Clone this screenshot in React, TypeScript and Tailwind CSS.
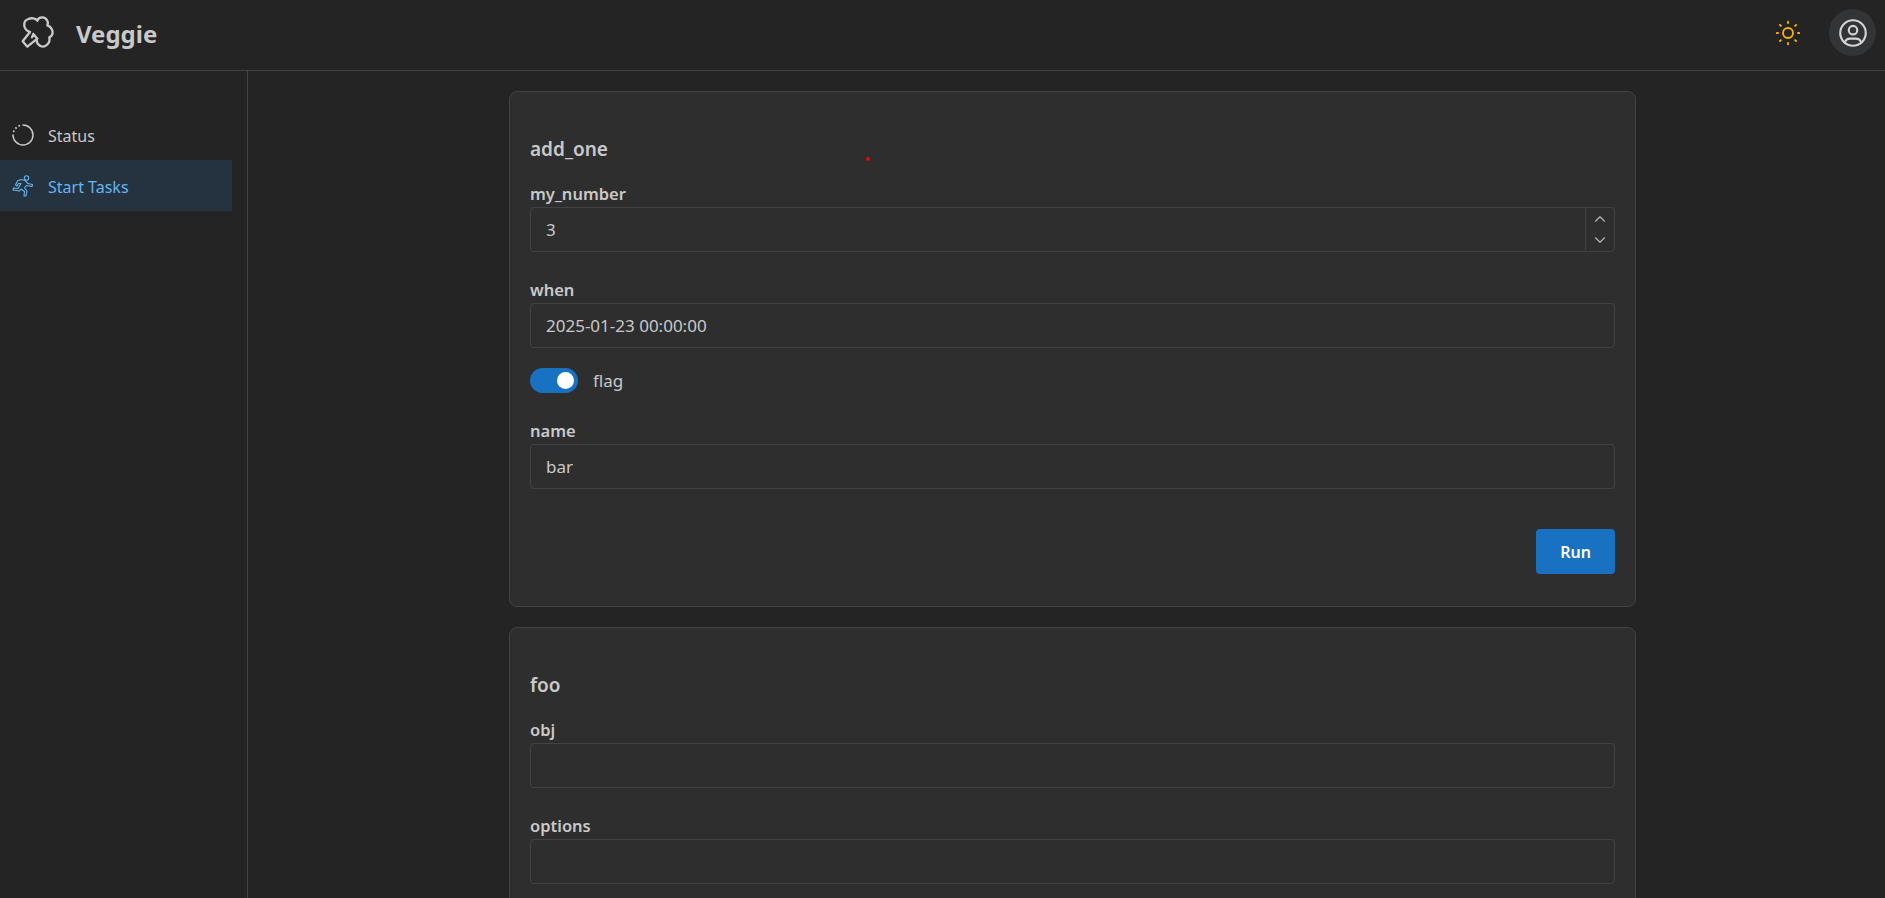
import { TbSun, TbUserCircle, TbChevronUp, TbChevronDown } from "react-icons/tb";

function Field({ label, value, number, className }: { label: string; value?: string; number?: boolean; className: string }) {
  return (
    <div className={className}>
      <div className="text-[16.5px] leading-[20px] font-semibold text-[#c9c9c9] mb-[3px]">{label}</div>
      <div className="relative h-[45px] border border-[#424242] rounded-[4px] bg-[#2e2e2e] flex items-center pl-[15px] text-[17px] text-[#c9c9c9]">
        {value}
        {number && (
          <div className="absolute right-0 top-0 bottom-0 w-[29px] border-l border-[#424242] flex flex-col items-center justify-between py-[2px] text-[#b8b8b8]">
            <TbChevronUp size={18} strokeWidth={1.5} />
            <TbChevronDown size={18} strokeWidth={1.5} />
          </div>
        )}
      </div>
    </div>
  );
}

function Logo() {
  return (
    <svg width="60" height="50" viewBox="0 0 180 150" fill="none" stroke="#c9c9c9" strokeWidth="7" strokeLinecap="round" strokeLinejoin="round" className="mb-[4px]">
      <path d="M60 72 C40 66 36 40 55 33 C65 28 78 32 82 38 C86 26 105 24 112 38 C116 46 112 50 112 52 C128 58 135 80 118 88 C122 105 105 122 90 113 C84 110 80 105 80 97" />
      <path d="M60 72 L38 100 L52 116 L82 92 L70 78 M70 78 L66 88" />
    </svg>
  );
}

function StatusIcon() {
  return (
    <svg width="24" height="24" viewBox="0 0 24 24" fill="none" stroke="currentColor" strokeWidth="1.5" strokeLinecap="round">
      <path d="M12 2a10 10 0 1 1 -10 10" />
      <path d="M2.8 8.2h.01M5 5h.01M8.2 2.8h.01" strokeWidth="2" />
    </svg>
  );
}

function RunIcon() {
  return (
    <svg width="24" height="24" viewBox="0 0 24 24" fill="none" stroke="currentColor" strokeWidth="1.1" strokeLinejoin="round">
      <circle cx="15.5" cy="4" r="2.2" />
      <path d="M10 5.5 L14 6.5 L17 9.5 L21.5 10.5 L21 12.5 L15.5 11.5 L13.5 14 L16 17 L15 22 L13 22 L13.5 17.5 L10 15 L8.5 17 L2 16 L2.5 14 L7 14.5 L10 9.5 L7.5 9.5 L6 12 L4.5 11 L6.5 7 Z" />
    </svg>
  );
}

export default function App() {
  return (
    <div className="h-[898px] overflow-hidden bg-[#242424] font-['Noto_Sans','Open_Sans',sans-serif] flex flex-col">
      <header className="h-[71px] shrink-0 border-b border-[#424242] flex items-center pl-[10px] pr-[9px]">
        <Logo />
        <div className="ml-[6px] mb-[2px] text-[24px] font-bold text-[#c9c9c9]">Veggie</div>
        <div className="ml-auto mb-[5px] flex items-center gap-[26px]">
          <TbSun size={30} strokeWidth={1.5} className="text-[#fab005]" />
          <div className="w-[47px] h-[47px] rounded-full bg-[#323436] flex items-center justify-center text-[#d4d4d4]">
            <TbUserCircle size={34} strokeWidth={1.5} />
          </div>
        </div>
      </header>
      <div className="flex flex-1 min-h-0">
        <aside className="w-[248px] shrink-0 border-r border-[#424242] pt-[38px]">
          <nav className="w-[232px]">
            <div className="h-[51px] flex items-center pl-[11px] text-[#c9c9c9] text-[16px]">
              <StatusIcon />
              <span className="ml-[13px] mt-[2px]">Status</span>
            </div>
            <div className="h-[51px] flex items-center pl-[11px] text-[#66b5f0] bg-[#24333f] text-[16px]">
              <RunIcon />
              <span className="ml-[13px] mt-[2px]">Start Tasks</span>
            </div>
          </nav>
        </aside>
        <main className="flex-1 min-w-0 pl-[261px] pr-[249px] pt-[20px]">
          <section className="relative border border-[#424242] rounded-[8px] bg-[#2e2e2e] px-[20px] pt-[43px] pb-[32px] mb-[20px]">
            <div className="absolute left-[356px] top-[65px] w-[4px] h-[4px] rounded-full bg-[#e00b0b]" />
            <h2 className="text-[19px] leading-[28px] font-semibold text-[#c9c9c9]">add_one</h2>
            <Field className="mt-[21px]" label="my_number" value="3" number />
            <Field className="mt-[28px]" label="when" value="2025-01-23 00:00:00" />
            <div className="flex items-center h-[25px] mt-[20px]">
              <div className="w-[48px] h-[25px] rounded-full bg-[#1971c2] flex items-center justify-end pr-[4px]">
                <div className="w-[17px] h-[17px] rounded-full bg-white" />
              </div>
              <span className="ml-[15px] text-[17px] text-[#c9c9c9]">flag</span>
            </div>
            <Field className="mt-[28px]" label="name" value="bar" />
            <div className="flex justify-end mt-[40px]">
              <button className="w-[79px] h-[45px] rounded-[4px] bg-[#1971c2] text-white text-[16px] font-semibold">Run</button>
            </div>
          </section>
          <section className="border border-[#424242] rounded-[8px] bg-[#2e2e2e] px-[20px] pt-[43px] pb-[31px]">
            <h2 className="text-[19px] leading-[28px] font-semibold text-[#c9c9c9]">foo</h2>
            <Field className="mt-[21px]" label="obj" />
            <Field className="mt-[28px]" label="options" />
          </section>
        </main>
      </div>
    </div>
  );
}
